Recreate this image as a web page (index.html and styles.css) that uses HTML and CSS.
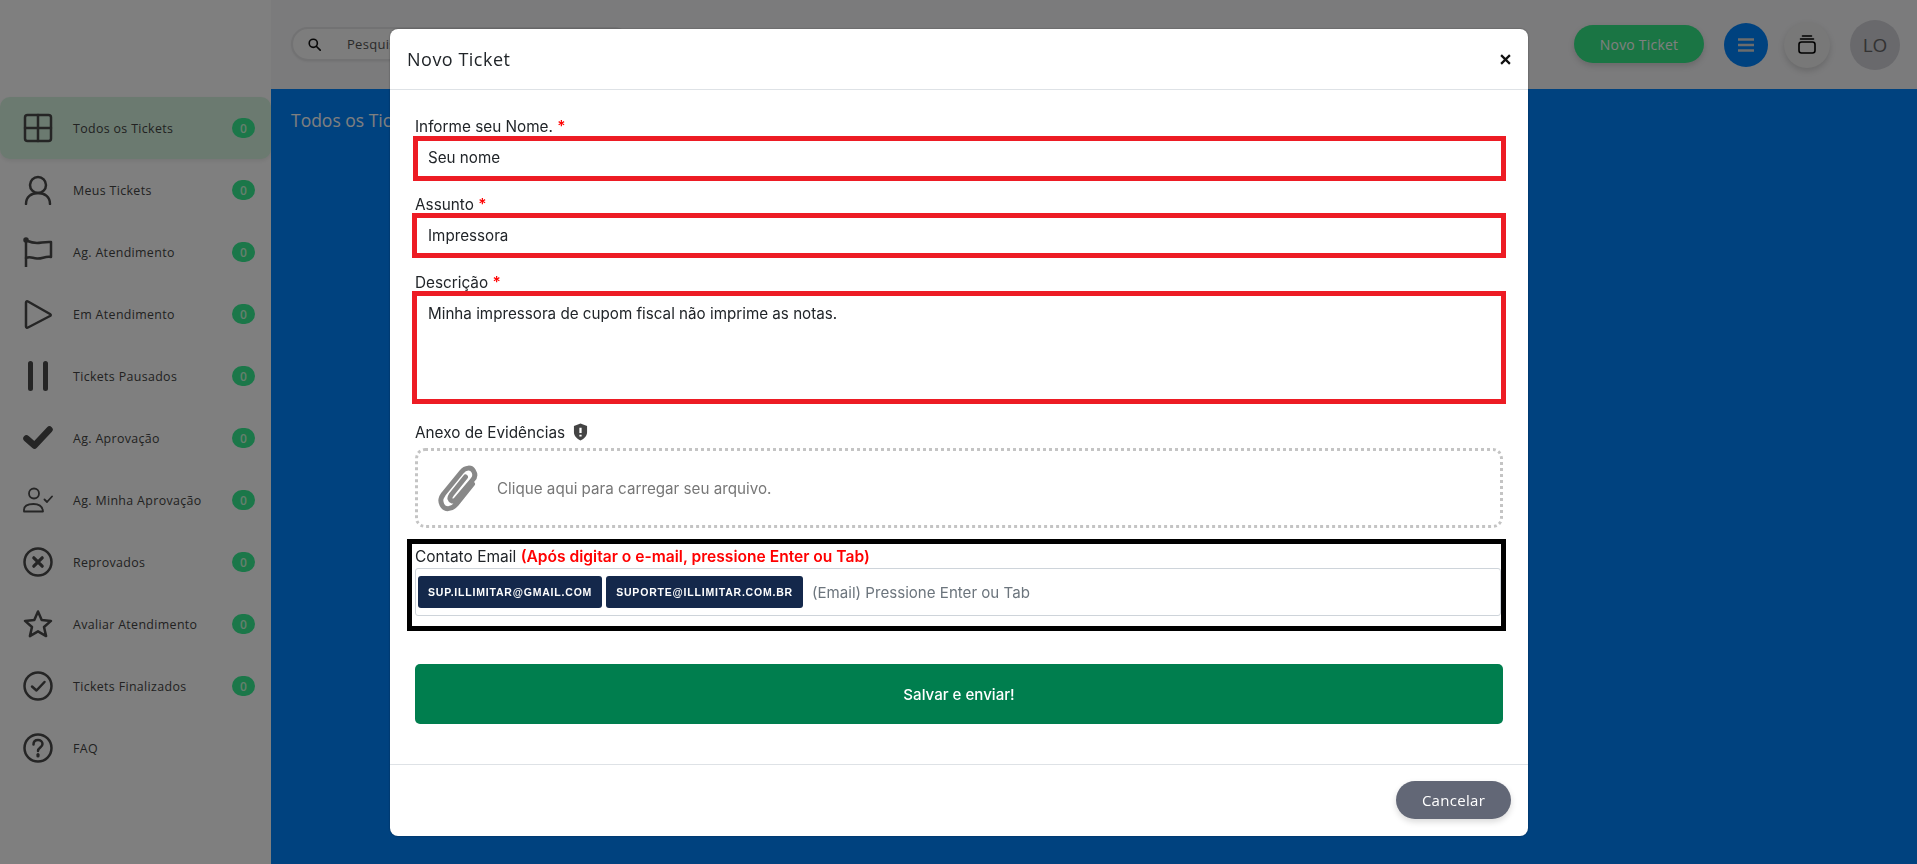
FILE: index.html
```html
<!DOCTYPE html>
<html lang="pt-BR">
<head>
<meta charset="utf-8">
<title>Novo Ticket</title>
<link rel="stylesheet" href="styles.css">
</head>
<body>
<div class="app">
  <aside class="sidebar">
    <nav class="menu">
      <a class="item active"><svg class="ico" viewBox="0 0 30 30"><rect x="2" y="2" width="26" height="26" rx="2.500"/><path d="M15 2v26M2 15h26"/></svg><span class="lbl">Todos os Tickets</span><span class="badge">0</span></a>
      <a class="item"><svg class="ico" viewBox="0 0 30 30"><circle cx="15" cy="10" r="8"/><path d="M3 29c0-7 5-11 12-11s12 4 12 11"/></svg><span class="lbl">Meus Tickets</span><span class="badge">0</span></a>
      <a class="item"><svg class="ico" viewBox="0 0 30 30"><path d="M3 3v27"/><circle class="dot" cx="3" cy="3" r="1.500"/><path d="M3 3.500c4 1.500 7 2.500 11 2.500s8-1.500 14-1v15c-6-1-9 2-14 1.500s-7-2.500-11-.5"/></svg><span class="lbl">Ag. Atendimento</span><span class="badge">0</span></a>
      <a class="item"><svg class="ico" viewBox="0 0 30 30"><path d="M3 3.500v24c0 1 1 1.500 2 1l22-11.500c1-.6 1-1.400 0-2L5 2.500c-1-.5-2 0-2 1z"/></svg><span class="lbl">Em Atendimento</span><span class="badge">0</span></a>
      <a class="item"><svg class="ico thick" viewBox="0 0 30 30"><path d="M7.500 2.500v25M22.500 2.500v25"/></svg><span class="lbl">Tickets Pausados</span><span class="badge">0</span></a>
      <a class="item"><svg class="ico heavy" viewBox="0 0 30 30"><path d="M3.500 15.500l8 7L26.500 6.500"/></svg><span class="lbl">Ag. Aprovação</span><span class="badge">0</span></a>
      <a class="item"><svg class="ico thin" viewBox="0 0 30 30"><circle cx="11" cy="8.500" r="5"/><path d="M1 26.500v-1.500c0-4 4-6 9.500-6s9 2 9.500 7.500zM21.500 14.500l2.500 2.500 5-5.500"/></svg><span class="lbl">Ag. Minha Aprovação</span><span class="badge">0</span></a>
      <a class="item"><svg class="ico" viewBox="0 0 30 30"><circle cx="15" cy="15" r="13.500"/><path class="b" d="M10.800 10.800l8.400 8.400M19.200 10.800l-8.400 8.400"/></svg><span class="lbl">Reprovados</span><span class="badge">0</span></a>
      <a class="item"><svg class="ico" viewBox="0 0 30 30"><path d="M15 2.500l3.700 8.600 9.300.8-7 6.100 2.100 9.100L15 22.300l-8.100 4.800L9 18 2 11.900l9.300-.8z"/></svg><span class="lbl">Avaliar Atendimento</span><span class="badge">0</span></a>
      <a class="item"><svg class="ico" viewBox="0 0 30 30"><circle cx="15" cy="15" r="13.500"/><path d="M9 15.500l4.500 4L21.500 11"/></svg><span class="lbl">Tickets Finalizados</span><span class="badge">0</span></a>
      <a class="item"><svg class="ico" viewBox="0 0 30 30"><circle cx="15" cy="15" r="13.500"/><path d="M10.500 11.500c0-3 2-4.500 4.500-4.500s4.500 1.700 4.500 4c0 3.500-4.500 3.500-4.500 7"/><path class="b" d="M15 21.500v1.500"/></svg><span class="lbl">FAQ</span></a>
    </nav>
  </aside>
  <div class="content">
    <header class="topbar">
      <div class="search">
        <svg class="search-ico" viewBox="0 0 16 16"><circle cx="6.500" cy="6.500" r="5"/><path d="M10.200 10.200l4.800 4.800"/></svg>
        <span class="search-text">Pesquisar</span>
      </div>
      <div class="top-actions">
        <button class="new-btn">Novo Ticket</button>
        <span class="circle menu-btn"><svg viewBox="0 0 16 14"><path d="M0 1.500h16M0 7h16M0 12.500h16"/></svg></span>
        <span class="circle stack-btn"><svg viewBox="0 0 18 19"><path d="M4.500 1h9M2.500 4h13"/><rect x="1" y="7" width="16" height="11" rx="2.500"/></svg></span>
        <span class="circle avatar">LO</span>
      </div>
    </header>
    <main class="main"><h1 class="page-title">Todos os Tickets</h1></main>
  </div>
</div>

<div class="backdrop"></div>

<section class="modal">
  <header class="modal-head">
    <h2>Novo Ticket</h2>
    <button class="close" aria-label="Fechar"><svg viewBox="0 0 10 10"><path d="M1 1l8 8M9 1L1 9"/></svg></button>
  </header>
  <div class="modal-body">
    <label class="field-label">Informe seu Nome. <b>*</b></label>
    <div class="box box-first">Seu nome</div>
    <label class="field-label nudge">Assunto <b>*</b></label>
    <div class="box box-low">Impressora</div>
    <label class="field-label nudge">Descrição <b>*</b></label>
    <div class="box box-area">Minha impressora de cupom fiscal não imprime as notas.</div>
    <label class="field-label attach-label nudge">Anexo de Evidências
      <svg class="shield" viewBox="0 0 16 18"><path d="M8 0l7 2.500v6.500c0 4.200-3 7.200-7 9-4-1.800-7-4.800-7-9V2.500z"/><path class="mark" d="M8 4.500v5.500M8 12v1.800"/></svg>
    </label>
    <div class="drop">
      <svg class="clip" viewBox="0 0 38 47"><path d="M34 19L18 39C13 45 6 45 3.500 40C1 35 3 32 5 29L23 7C27 2 33 2 35 6C37.500 10 36 13 34 15L17 35C15 37 12 36 11.500 34C11 32 12 31 13 29.500L27 12"/></svg>
      <span>Clique aqui para carregar seu arquivo.</span>
    </div>
    <div class="contact">
      <div class="contact-label">Contato Email <b>(Após digitar o e-mail, pressione Enter ou Tab)</b></div>
      <div class="tags">
        <span class="tag">SUP.ILLIMITAR@GMAIL.COM</span>
        <span class="tag">SUPORTE@ILLIMITAR.COM.BR</span>
        <span class="tags-ph">(Email) Pressione Enter ou Tab</span>
      </div>
    </div>
    <button class="save">Salvar e enviar!</button>
  </div>
  <footer class="modal-foot"><button class="cancel">Cancelar</button></footer>
</section>
</body>
</html>
```
FILE: styles.css
```css
* { box-sizing: border-box; }
html, body { margin: 0; height: 100%; overflow: hidden; }
body { font-family: "Inter", "Liberation Sans", sans-serif; color: #212529; background: #fff; }
button { font: inherit; border: 0; cursor: pointer; }

.app { display: flex; height: 864px; }

.sidebar { width: 271px; flex: none; background: #fff; padding-top: 97px; }
.menu { display: flex; flex-direction: column; }
.item { height: 62px; display: flex; align-items: center; padding: 0 16px 0 23px; font-family: "Open Sans", sans-serif; font-size: 12.400px; letter-spacing: .35px; color: #444; }
.item.active { background: #d6f5e0; border-radius: 10px; box-shadow: 0 2px 4px rgba(0,0,0,.08); }
.lbl { margin-left: 20px; flex: 1; white-space: nowrap; }
.ico { width: 30px; height: 30px; flex: none; fill: none; stroke: #4a4a4a; stroke-width: 2.500; stroke-linecap: round; stroke-linejoin: round; }
.ico.thick { stroke-width: 5; }
.ico.heavy { stroke-width: 6.500; }
.ico.thin { stroke-width: 1.800; }
.ico .b { stroke-width: 3.200; }
.ico .dot { fill: #4a4a4a; }
.badge { width: 23px; height: 20px; flex: none; border-radius: 10px; background: #36ee92; color: #cfd; font-family: "Open Sans", sans-serif; font-size: 12px; font-weight: 600; display: flex; align-items: center; justify-content: center; letter-spacing: 0; }

.content { flex: 1; display: flex; flex-direction: column; min-width: 0; }
.topbar { height: 89px; flex: none; background: #f6f6f8; display: flex; align-items: center; justify-content: space-between; padding: 0 17px 0 20px; }
.search { width: 340px; height: 34px; margin-top: -1px; border: 2px solid #e4e4e6; border-radius: 17px; display: flex; align-items: center; padding-left: 15px; background: #fafafa; box-shadow: 0 1px 2px rgba(0,0,0,.05); }
.search-ico { width: 13px; height: 13px; fill: none; stroke: #111; stroke-width: 2; stroke-linecap: round; }
.search-text { margin-left: 26px; font-family: "Open Sans", sans-serif; font-size: 13px; letter-spacing: .3px; color: #555; }
.top-actions { display: flex; align-items: center; }
.new-btn { width: 130px; height: 38px; border-radius: 19px; background: #34ea88; color: #fff; font-family: "Open Sans", sans-serif; font-size: 14px; letter-spacing: .2px; box-shadow: 0 3px 6px rgba(0,0,0,.15); margin-top: -1px; }
.circle { display: flex; align-items: center; justify-content: center; border-radius: 50%; flex: none; }
.menu-btn { width: 44px; height: 44px; margin-left: 20px; background: #0084ff; }
.menu-btn svg { width: 16px; height: 14px; fill: none; stroke: #d8d8d8; stroke-width: 2.400; stroke-linecap: round; }
.stack-btn { width: 46px; height: 46px; margin-left: 16px; background: #f0f0f0; box-shadow: 0 3px 6px rgba(0,0,0,.15); }
.stack-btn svg { width: 18px; height: 19px; fill: none; stroke: #000; stroke-width: 1.600; stroke-linecap: round; }
.avatar { width: 50px; height: 50px; margin-left: 20px; background: #d2d2d8; color: #666; font-family: "Open Sans", sans-serif; font-size: 19px; }

.main { flex: 1; background: #0084ff; padding: 19px 20px; }
.page-title { margin: 0; font-family: "Open Sans", sans-serif; font-size: 17.500px; font-weight: 500; color: #fff; }

.backdrop { position: fixed; inset: 0; background: rgba(0,0,0,.5); }

.modal { position: fixed; left: 390px; top: 29px; width: 1138px; height: 807px; background: #fff; border-radius: 8px; display: flex; flex-direction: column; box-shadow: 0 0 2px rgba(0,0,0,.4); }
.modal-head { height: 61px; flex: none; display: flex; align-items: center; justify-content: space-between; padding: 0 17px; border-bottom: 1px solid #dee2e6; }
.modal-head h2 { margin: 0; font-family: "Open Sans", sans-serif; font-size: 18px; font-weight: 500; color: #212529; letter-spacing: .5px; }
.close { width: 16px; height: 16px; padding: 0; margin-right: -2px; background: none; }
.close svg { display: block; width: 11px; height: 11px; margin: auto; fill: none; stroke: #111; stroke-width: 2; }

.modal-body { flex: 1; padding: 27px 25px 0 23px; }
.field-label { display: block; height: 19px; padding-left: 2px; font-size: 15.300px; line-height: 19px; color: #212529; }
.field-label.nudge { padding-top: 1px; }
.field-label b { color: #f00; font-weight: 600; }
.box { height: 45px; margin: 0 -3px 14px -1px; border: 5px solid #ed1c24; padding: 0 0 0 11px; font-size: 15.200px; line-height: 33px; color: #212529; background: #fff; }
.box-first { margin-left: 0; margin-bottom: 13px; padding-left: 10px; }
.box-low { padding-top: 1px; }
.box-area { height: 113px; margin-bottom: 18px; line-height: 32px; padding-top: 2px; }
.attach-label { display: flex; align-items: center; gap: 8px; }
.shield { width: 15px; height: 18px; fill: #444; }
.shield .mark { fill: none; stroke: #fff; stroke-width: 2.400; }
.drop { height: 80px; margin: 7px 0 0 2px; border: 3px dotted #c4c4c4; border-radius: 10px; display: flex; align-items: center; padding-left: 19px; font-size: 15.200px; color: #777; }
.clip { width: 41px; height: 47px; flex: none; margin-right: 19px; fill: none; stroke: #888; stroke-width: 5; stroke-linecap: round; stroke-linejoin: round; }

.contact { height: 92px; margin: 11px -3px 0 -6px; border: 5px solid #000; padding: 4px 0 0 3px; }
.contact-label { font-size: 15.500px; line-height: 18px; color: #212529; }
.contact-label b { color: #f00; font-weight: 600; font-size: 15.600px; }
.tags { height: 48px; margin-top: 2px; border: 1px solid #ced4da; border-radius: 3px; display: flex; align-items: center; padding-left: 2px; gap: 4px; }
.tag { height: 32px; padding: 0 10px; background: #14284b; color: #fff; border-radius: 3px; display: flex; align-items: center; font-family: "Liberation Sans", sans-serif; font-size: 10.500px; font-weight: 700; letter-spacing: .8px; white-space: nowrap; }
.tags-ph { margin-left: 5px; font-size: 15.100px; color: #6c757d; }

.save { display: block; width: 1088px; height: 60px; margin: 33px 0 0 2px; background: #007e4e; color: #fff; font-size: 15.100px; font-weight: 500; border-radius: 5px; }

.modal-foot { height: 72px; flex: none; border-top: 1px solid #dee2e6; display: flex; align-items: center; justify-content: flex-end; padding: 0 17px 2px 0; }
.cancel { width: 115px; height: 38px; border-radius: 19px; background: #626776; color: #fff; font-family: "Open Sans", sans-serif; font-size: 15px; font-weight: 500; letter-spacing: .3px; box-shadow: 0 3px 6px rgba(0,0,0,.15); }
```
